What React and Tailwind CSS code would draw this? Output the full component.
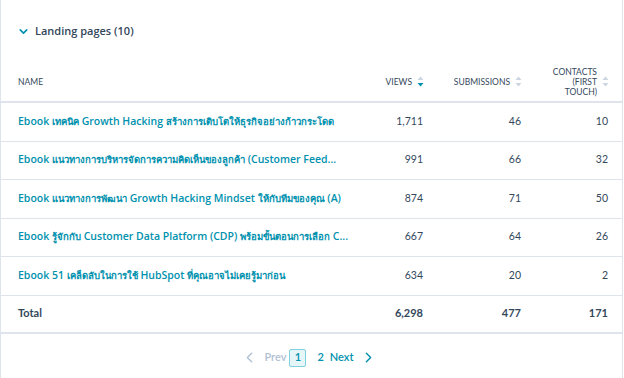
import { ChevronDown, ChevronLeft, ChevronRight } from 'lucide-react'

const rows = [
  { name: 'Ebook เทคนิค Growth Hacking สร้างการเติบโตให้ธุรกิจอย่างก้าวกระโดด', views: '1,711', submissions: '46', contacts: '10' },
  { name: 'Ebook แนวทางการบริหารจัดการความคิดเห็นของลูกค้า (Customer Feed...', views: '991', submissions: '66', contacts: '32' },
  { name: 'Ebook แนวทางการพัฒนา Growth Hacking Mindset ให้กับทีมของคุณ (A)', views: '874', submissions: '71', contacts: '50' },
  { name: 'Ebook รู้จักกับ Customer Data Platform (CDP) พร้อมขั้นตอนการเลือก C...', views: '667', submissions: '64', contacts: '26' },
  { name: 'Ebook 51 เคล็ดลับในการใช้ HubSpot ที่คุณอาจไม่เคยรู้มาก่อน', views: '634', submissions: '20', contacts: '2' },
]

// Thai glyphs come from a wider fallback font, so set them a touch smaller
function Name({ text }) {
  return text.split(/([\u0E00-\u0E7F]+)/).map((part, i) =>
    /[\u0E00-\u0E7F]/.test(part) ? (
      <span key={i} className="text-[9.5px]">{part}</span>
    ) : (
      <span key={i}>{part}</span>
    )
  )
}

function SortIcon({ active }) {
  return (
    <svg width="7" height="11" viewBox="0 0 7 11" className="shrink-0 ml-[5px]">
      <path d="M3.5 0.5 L6.5 4 L0.5 4 Z" fill="#cbd6e2" />
      <path d="M3.5 10.5 L6.5 7 L0.5 7 Z" fill={active ? '#0091ae' : '#cbd6e2'} />
    </svg>
  )
}

const cols = 'grid grid-cols-[345px_92px_98px_87px]'

export default function App() {
  return (
    <div className="w-[623px] h-[378px] bg-white border-l border-r border-[#dfe3eb] text-[#33475b] font-['Lato','Noto_Sans',sans-serif]">
      {/* section title */}
      <div className="flex items-center h-[62px] pl-[16px]">
        <ChevronDown className="w-[13px] h-[13px] text-[#0091ae]" strokeWidth={3} />
        <span className="ml-[5px] text-[11px] font-semibold font-['Open_Sans',sans-serif]">Landing pages (10)</span>
      </div>

      {/* header */}
      <div className={`${cols} h-[41px] border-b-2 border-[#dfe3eb] text-[8.5px] uppercase leading-[10px]`}>
        <div className="flex items-center pl-[17px] pt-[1px]">Name</div>
        <div className="flex items-center justify-end pr-[14px]">
          Views <SortIcon active />
        </div>
        <div className="flex items-center justify-end pr-[14px]">
          Submissions <SortIcon />
        </div>
        <div className="flex items-center justify-end pr-[14px]">
          <span className="text-right">Contacts<br />(First<br />Touch)</span>
          <SortIcon />
        </div>
      </div>

      {/* rows */}
      {rows.map((r) => (
        <div key={r.views} className={`${cols} h-[38.5px] border-b border-[#dfe3eb] text-[10.5px] items-center`}>
          <div className="pl-[17px] text-[#0091ae] text-[10.5px] font-semibold font-['Open_Sans',sans-serif] whitespace-nowrap">
            <Name text={r.name} />
          </div>
          <div className="text-right pr-[15px]">{r.views}</div>
          <div className="text-right pr-[15px]">{r.submissions}</div>
          <div className="text-right pr-[15px]">{r.contacts}</div>
        </div>
      ))}

      {/* total */}
      <div className={`${cols} h-[38px] border-b-2 border-[#dfe3eb] text-[11px] font-bold items-center`}>
        <div className="pl-[17px]">Total</div>
        <div className="text-right pr-[15px]">6,298</div>
        <div className="text-right pr-[15px]">477</div>
        <div className="text-right pr-[15px]">171</div>
      </div>

      {/* pagination */}
      <div className="flex items-center justify-center h-[48px] pr-[5px] text-[11px] font-semibold">
        <ChevronLeft className="w-[17px] h-[17px] text-[#b0c1d4]" strokeWidth={2} />
        <span className="ml-[6px] text-[#b0c1d4]">Prev</span>
        <span className="ml-[3px] w-[17px] h-[18px] flex items-center justify-center border border-[#7fd1de] bg-[#e5f5f8] rounded-[2px] text-[#0091ae]">1</span>
        <span className="ml-[11px] text-[#0091ae]">2</span>
        <span className="ml-[6px] text-[#0091ae]">Next</span>
        <ChevronRight className="ml-[6px] w-[17px] h-[17px] text-[#0091ae]" strokeWidth={2} />
      </div>
    </div>
  )
}
